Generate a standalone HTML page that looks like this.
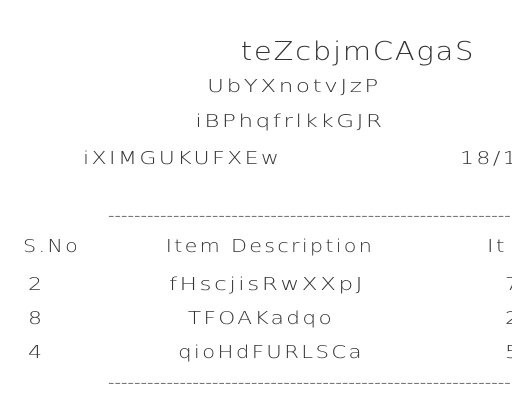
<!DOCTYPE html>
<html><head><style>
body{margin:0;width:512px;height:400px;background:#fff;overflow:hidden;position:relative;font-family:"DejaVu Sans","Liberation Sans",sans-serif;font-weight:200;color:#333;}
div{position:absolute;white-space:nowrap;letter-spacing:2px;font-size:18px}
.c{transform:translateX(-50%) scaleX(1.22)}
.l{transform-origin:left;transform:scaleX(1.22)}
</style></head><body>
<div class="c" style="left:358px;top:37px;font-size:26px;letter-spacing:1.5px;transform:translateX(-50%) scaleX(1.12)">teZcbjmCAgaS</div>
<div class="c" style="left:294px;top:76px;transform:translateX(-50%) scaleX(1.28)">UbYXnotvJzP</div>
<div class="c" style="left:290px;top:111px;transform:translateX(-50%) scaleX(1.28)">iBPhqfrlkkGJR</div>
<div class="l" style="left:83px;top:148px">iXIMGUKUFXEw</div>
<div class="l" style="left:460px;top:148px">18/1</div>
<div style="left:108px;top:205px;letter-spacing:0">--------------------------------------------------------------</div>
<div class="l" style="left:23px;top:236px;transform:scaleX(1.15)">S.No</div>
<div class="c" style="left:270px;top:236px;transform:translateX(-50%) scaleX(1.15)">Item Description</div>
<div class="l" style="left:487px;top:236px">It</div>
<div class="l" style="left:28px;top:274px">2</div>
<div class="c" style="left:267px;top:274px;transform:translateX(-50%) scaleX(1.28)">fHscjisRwXXpJ</div>
<div class="l" style="left:505px;top:274px">7</div>
<div class="l" style="left:28px;top:308px">8</div>
<div class="c" style="left:261px;top:308px;transform:translateX(-50%) scaleX(1.2)">TFOAKadqo</div>
<div class="l" style="left:505px;top:308px">2</div>
<div class="l" style="left:28px;top:342px">4</div>
<div class="c" style="left:271px;top:342px;transform:translateX(-50%) scaleX(1.18)">qioHdFURLSCa</div>
<div class="l" style="left:505px;top:342px">5</div>
<div style="left:108px;top:372px;letter-spacing:0">--------------------------------------------------------------</div>
</body></html>
